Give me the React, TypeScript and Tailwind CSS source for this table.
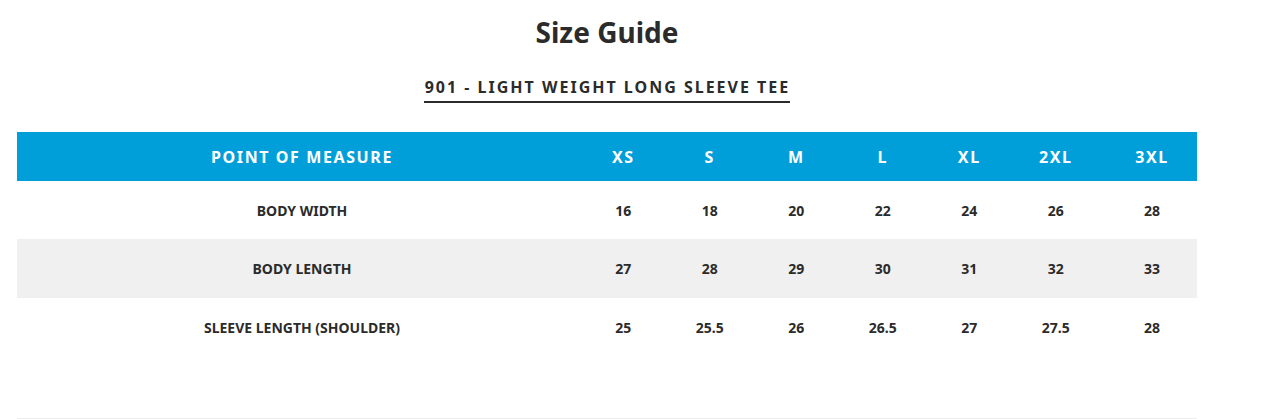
const sizes = ["XS", "S", "M", "L", "XL", "2XL", "3XL"];

const rows = [
  { name: "BODY WIDTH", values: ["16", "18", "20", "22", "24", "26", "28"] },
  { name: "BODY LENGTH", values: ["27", "28", "29", "30", "31", "32", "33"] },
  {
    name: "SLEEVE LENGTH (SHOULDER)",
    values: ["25", "25.5", "26", "26.5", "27", "27.5", "28"],
  },
];

const cols = "grid grid-cols-[563px_repeat(6,86.5px)_1fr]";

const App = () => {
  return (
    <div className="w-full h-[419px] bg-white font-['Noto_Sans','Open_Sans',sans-serif] text-[#2b2b2b] overflow-hidden">
      <div className="ml-[17px] w-[1180px] h-full flex flex-col border-b border-[#ececec]">
        <h1 className="mt-[14px] text-center text-[28px] leading-[36px] font-bold">
          Size Guide
        </h1>
        <div className="mt-[28px] flex justify-center">
          <h2 className="pb-[4px] border-b-2 border-[#2b2b2b] text-[16px] leading-[19px] font-bold tracking-[2px] pl-[1px]">
            901 - LIGHT WEIGHT LONG SLEEVE TEE
          </h2>
        </div>
        <div className="mt-[29px]">
          <div className={`${cols} h-[49px] items-center bg-[#009fda] text-white text-[16px] font-bold tracking-[1.6px]`}>
            <div className="text-center pl-[7px]">POINT OF MEASURE</div>
            {sizes.map((s, i) => (
              <div
                key={s}
                className={`text-center ${i === sizes.length - 1 ? "pl-[8px]" : ""}`}
              >
                {s}
              </div>
            ))}
          </div>
          {rows.map((row, r) => (
            <div
              key={row.name}
              className={`${cols} ${r === 1 ? "bg-[#f0f0f0] h-[59px]" : "h-[58px]"} items-center text-[14px] font-bold`}
            >
              <div className="text-center pl-[7px]">{row.name}</div>
              {row.values.map((v, i) => (
                <div
                  key={i}
                  className={`text-center ${i === row.values.length - 1 ? "pl-[8px]" : ""}`}
                >
                  {v}
                </div>
              ))}
            </div>
          ))}
        </div>
      </div>
    </div>
  );
};

export default App;
